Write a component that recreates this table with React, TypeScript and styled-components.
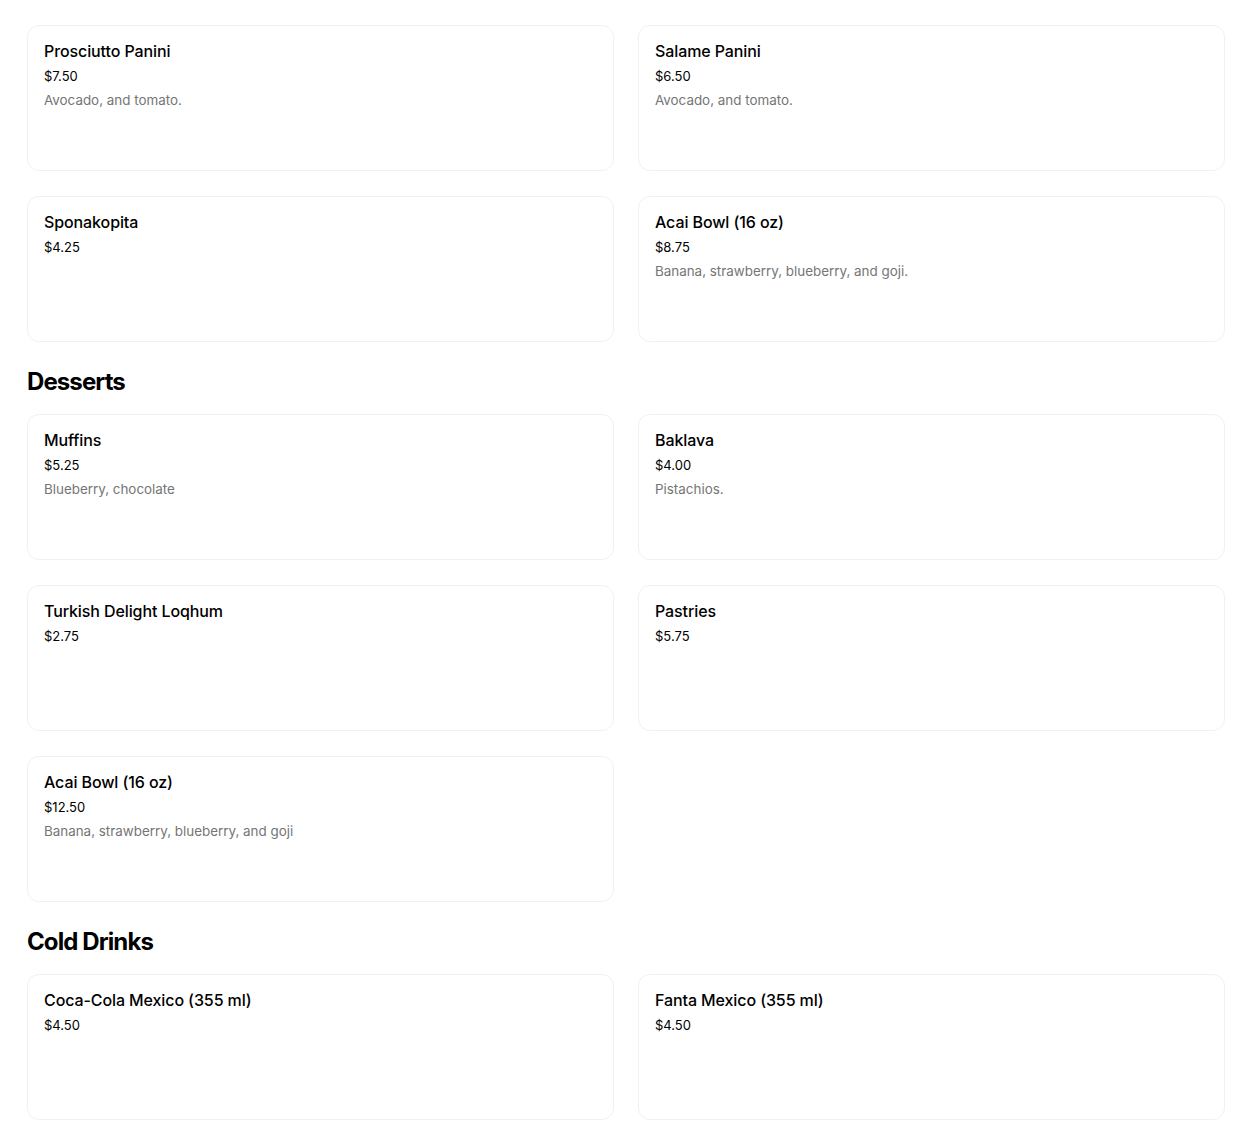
import React from "react";
import styled, { createGlobalStyle } from "styled-components";

type Item = { name: string; price: string; description?: string };
type Section = { title?: string; items: Item[] };

const sections: Section[] = [
  {
    items: [
      { name: "Prosciutto Panini", price: "$7.50", description: "Avocado, and tomato." },
      { name: "Salame Panini", price: "$6.50", description: "Avocado, and tomato." },
      { name: "Sponakopita", price: "$4.25" },
      { name: "Acai Bowl (16 oz)", price: "$8.75", description: "Banana, strawberry, blueberry, and goji." },
    ],
  },
  {
    title: "Desserts",
    items: [
      { name: "Muffins", price: "$5.25", description: "Blueberry, chocolate" },
      { name: "Baklava", price: "$4.00", description: "Pistachios." },
      { name: "Turkish Delight Loqhum", price: "$2.75" },
      { name: "Pastries", price: "$5.75" },
      { name: "Acai Bowl (16 oz)", price: "$12.50", description: "Banana, strawberry, blueberry, and goji" },
    ],
  },
  {
    title: "Cold Drinks",
    items: [
      { name: "Coca-Cola Mexico (355 ml)", price: "$4.50" },
      { name: "Fanta Mexico (355 ml)", price: "$4.50" },
    ],
  },
];

function App() {
  return (
    <>
      <GlobalStyle />
      <Page>
        {sections.map((s, i) => (
          <SectionBlock key={i}>
            {s.title && <SectionTitle>{s.title}</SectionTitle>}
            <ItemGrid>
              {s.items.map((item, j) => (
                <Card key={j}>
                  <ItemName>{item.name}</ItemName>
                  <Price>{item.price}</Price>
                  {item.description && <Description>{item.description}</Description>}
                </Card>
              ))}
            </ItemGrid>
          </SectionBlock>
        ))}
      </Page>
    </>
  );
}

export default App;

const GlobalStyle = createGlobalStyle`
  body {
    margin: 0;
    background: #fff;
    font-family: "Inter", "Noto Sans", sans-serif;
    color: #000;
  }
`;

const Page = styled.div`
  padding: 25px 25px 0 27px;
  display: flex;
  flex-direction: column;
  gap: 24px;
`;

const SectionBlock = styled.section`
  display: flex;
  flex-direction: column;
  gap: 16px;
`;

const SectionTitle = styled.h2`
  margin: 0;
  font-size: 24px;
  line-height: 32px;
  font-weight: 700;
  letter-spacing: -0.9px;
`;

const ItemGrid = styled.div`
  display: grid;
  grid-template-columns: 587px 587px;
  column-gap: 24px;
  row-gap: 25px;
`;

const Card = styled.div`
  box-sizing: border-box;
  height: 146px;
  border: 1px solid #f1f1f1;
  border-radius: 12px;
  padding: 15px 16px;
  display: flex;
  flex-direction: column;
`;

const ItemName = styled.div`
  font-size: 16px;
  line-height: 20px;
  font-weight: 500;
  letter-spacing: -0.1px;
  color: #000;
`;

const Price = styled.div`
  margin-top: 5px;
  font-size: 13px;
  line-height: 20px;
  color: #000;
`;

const Description = styled.div`
  margin-top: 4px;
  font-size: 13.4px;
  line-height: 20px;
  color: #757575;
`;
